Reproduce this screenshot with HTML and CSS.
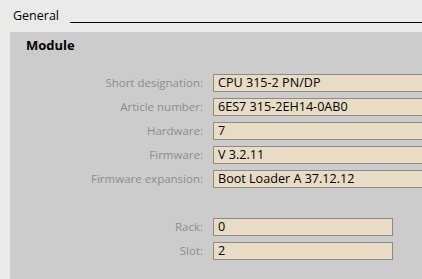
FILE: index.html
```html
<!DOCTYPE html>
<html>
<head>
    <title>Module properties</title>
    <link rel="stylesheet" href="styles.css">
</head>
<body>
    <div class="section-head">
        <span class="section-title">General</span>
        <span class="section-rule"></span>
    </div>

    <div class="panel">
        <h2 class="panel-title">Module</h2>

        <div class="fields fields-wide">
            <label>Short designation:</label>
            <div class="field">CPU 315-2 PN/DP</div>

            <label>Article number:</label>
            <div class="field">6ES7 315-2EH14-0AB0</div>

            <label>Hardware:</label>
            <div class="field">7</div>

            <label>Firmware:</label>
            <div class="field">V 3.2.11</div>

            <label>Firmware expansion:</label>
            <div class="field">Boot Loader A 37.12.12</div>
        </div>

        <div class="fields fields-short">
            <label>Rack:</label>
            <div class="field">0</div>

            <label>Slot:</label>
            <div class="field">2</div>
        </div>
    </div>
</body>
</html>
```

FILE: styles.css
```css
body { margin: 0; background: #eaeaea; font-family: "Open Sans", "Noto Sans", sans-serif; font-size: 12px; overflow: hidden; }
.section-head { display: flex; align-items: flex-end; height: 32px; padding-left: 13px; box-sizing: border-box; }
.section-title { color: #000; font-size: 12.5px; line-height: 16px; margin-bottom: 8px; }
.section-rule { flex: 1; height: 1px; background: #000; margin: 0 0 9px 11px; }
.panel { margin-left: 10px; background: #cccccc; padding: 4px 0 20px 16px; min-height: 247px; box-sizing: border-box; }
.panel-title { margin: 0; font-size: 13px; font-weight: bold; line-height: 18px; color: #000; }
.fields { display: grid; grid-auto-rows: 18px; column-gap: 10px; row-gap: 6px; margin-top: 20px; }
.fields-wide { grid-template-columns: 177px 1fr; }
.fields-wide .field { border-right: 0; }
.fields-short { grid-template-columns: 177px 180px; margin-top: 30px; }
.fields label { text-align: right; color: #8c8c8c; font-size: 11.5px; line-height: 18px; white-space: nowrap; }
.field { background: #e8dcc5; border: 1px solid #8a8a8a; box-sizing: border-box; padding-left: 4px; font-size: 12.6px; line-height: 16px; color: #000; white-space: nowrap; overflow: hidden; }
```
